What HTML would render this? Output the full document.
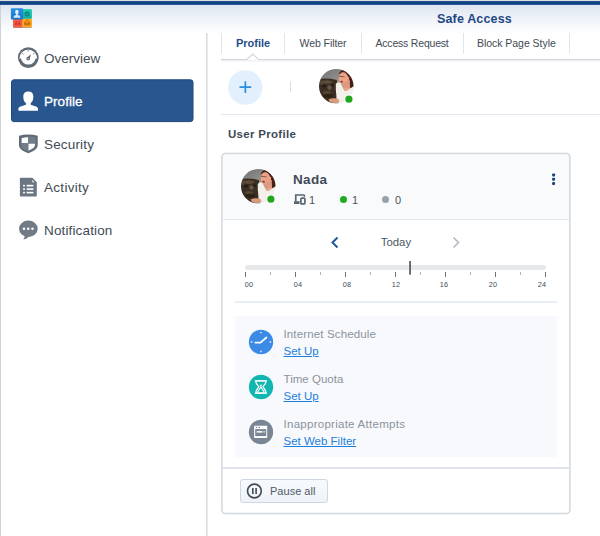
<!DOCTYPE html>
<html>
<head>
<meta charset="utf-8">
<title>Safe Access</title>
<style>
*{box-sizing:border-box;margin:0;padding:0}
html,body{width:600px;height:536px;overflow:hidden;background:#fff}
body{font-family:"Liberation Sans",sans-serif;color:#414b55;position:relative}
.abs{position:absolute}
.t{position:absolute;white-space:nowrap;line-height:1}
#topline{left:0;top:0;width:600px;height:1px;background:#dcdcd8}
#topbar{left:0;top:1px;width:600px;height:4px;background:linear-gradient(#2b5b99 0%,#0f4283 35%,#0f4283 65%,#34629d 100%)}
#hdr{left:0;top:5px;width:600px;height:29px;background:linear-gradient(#dfe6f1 0%,#eef2f8 45%,#ffffff 100%)}
#lborder{left:0;top:5px;width:1px;height:531px;background:#d0d1d3}
#title{left:437px;top:13px;font-size:12.5px;font-weight:bold;color:#1f4784;letter-spacing:.15px}
#vdiv{left:206px;top:33px;width:2px;height:503px;background:linear-gradient(90deg,#dadbdd 0,#dadbdd 50%,#e9eaec 50%)}
.nav{position:absolute;left:44px;font-size:13.5px;color:#414b55;line-height:1;white-space:nowrap;margin-top:1px}
#sel{left:11px;top:80px;width:183px;height:43px;background:#27538d;border-radius:3px;border:1px solid #1f4679}
.tab{position:absolute;top:38px;font-size:10.5px;color:#414b55;line-height:1;white-space:nowrap}
.tsep{position:absolute;top:33px;width:1px;height:21px;background:#dde5ef}
.lbl{position:absolute;left:283.500px;margin-top:.5px;font-size:11.5px;color:#8a939c;line-height:1;white-space:nowrap}
.lnk{position:absolute;left:283.500px;margin-top:.5px;font-size:11.5px;color:#1d7edb;text-decoration:underline;line-height:1;white-space:nowrap}
.tick{position:absolute;top:272px;width:1px;height:5px;background:#68737e}
.mtick{position:absolute;top:272px;width:1px;height:3px;background:#a9b4bf}
.tl{position:absolute;top:281px;font-size:7.300px;letter-spacing:.2px;color:#414b55;line-height:1;white-space:nowrap;transform:translateX(-50%)}
</style>
</head>
<body>
<div class="abs" id="hdr"></div>
<div class="abs" id="topline"></div>
<div class="abs" id="topbar"></div>
<div class="abs" id="lborder"></div>
<div class="t" id="title">Safe Access</div>

<!-- app icon -->
<svg class="abs" style="left:8px;top:5px" width="28" height="26" viewBox="8 5 28 26">
  <defs>
    <linearGradient id="gbl" x1="0" y1="0" x2="0" y2="1"><stop offset="0" stop-color="#2a90e4"/><stop offset="1" stop-color="#1876cc"/></linearGradient>
    <linearGradient id="gte" x1="0" y1="0" x2="0" y2="1"><stop offset="0" stop-color="#22d0ba"/><stop offset="1" stop-color="#10ad9c"/></linearGradient>
  </defs>
  <rect x="13.200" y="19.800" width="18.600" height="8.200" rx="1.200" fill="#6b4a3a" opacity=".55"/>
  <rect x="13" y="18.500" width="9.600" height="9" rx="1" fill="#f45a45"/>
  <rect x="22.300" y="18.500" width="9.600" height="8.800" rx="1" fill="#fbab1f"/>
  <rect x="22.600" y="9.100" width="9.300" height="9.700" rx="1" fill="url(#gte)"/>
  <rect x="10.900" y="8.300" width="12.300" height="11.100" rx="1" fill="url(#gbl)"/>
  <ellipse cx="16.900" cy="12" rx="1.750" ry="2.300" fill="#e2efff"/>
  <path d="M16 13.500 H17.800 V15 Q20.300 15.600 20.300 17.200 V17.800 H13.500 V17.200 Q13.500 15.600 16 15Z" fill="#d6e8fb"/>
  <circle cx="27.100" cy="13.700" r="2.550" fill="#0d887c"/>
  <path d="M26 13.900 L26.800 14.700 L28.300 12.900" stroke="#2fcdb8" stroke-width=".7" fill="none"/>
  <rect x="24.100" y="21.700" width="6.300" height="3.700" rx=".8" fill="#d26f0b"/>
  <path d="M25.700 21.800 V21 Q25.700 20 27.250 20 Q28.800 20 28.800 21 V21.800" stroke="#d26f0b" stroke-width="1" fill="none"/>
  <rect x="26.300" y="22.400" width="1.900" height=".6" fill="#f6b24a"/>
  <g fill="#c93a2a"><circle cx="16.200" cy="21.800" r=".9"/><circle cx="19.200" cy="21.800" r=".9"/><rect x="15.100" y="22.900" width="2.200" height="2.200"/><rect x="18.100" y="22.900" width="2.200" height="2.200"/></g>
</svg>

<!-- sidebar -->
<div class="abs" id="vdiv"></div>
<svg class="abs" style="left:8px;top:76px" width="190" height="50" viewBox="8 76 190 50"><rect x="11.500" y="79.800" width="181.500" height="41.800" rx="2.500" fill="#2a568f" stroke="#1d4781" stroke-width="1"/></svg>
<div class="nav" style="top:51px;letter-spacing:0">Overview</div>
<div class="nav" style="top:94px;color:#fff;letter-spacing:.05px;-webkit-text-stroke:.3px #fff">Profile</div>
<div class="nav" style="top:137px;letter-spacing:.17px">Security</div>
<div class="nav" style="top:180px;letter-spacing:.3px">Activity</div>
<div class="nav" style="top:223px;letter-spacing:.14px">Notification</div>

<!-- nav icons -->
<svg class="abs" style="left:12px;top:42px" width="32" height="204" viewBox="12 42 32 204">
  <!-- gauge -->
  <circle cx="28.300" cy="57.600" r="10.400" fill="#5f6a75"/>
  <path d="M19.400 58.600 A8.900 8.900 0 0 1 37.200 58.600Z" fill="#fff"/>
  <circle cx="28.300" cy="57.200" r="7.400" fill="#fff"/>
  <g stroke="#8a939c" stroke-width="1" stroke-linecap="round"><path d="M28.200 50 V51.300"/><path d="M22.200 53.200 L23.300 54.100"/><path d="M34.400 53.200 L33.300 54.100"/></g>
  <path d="M30.900 54.300 L29.600 59.400 L26.700 57.800Z" fill="#5f6a75"/>
  <circle cx="28.100" cy="58.700" r="1.800" fill="#5f6a75"/>
  <circle cx="28.100" cy="58.700" r=".6" fill="#e8eaec"/>
  <!-- person -->
  <path d="M28.300 91.500 C31.500 91.500 33.300 93.300 33.300 96 C33.300 97.500 33.200 98.500 33 99.400 C32.600 101 31.500 102.300 30.700 103 V104.700 L36.500 106.700 C37.600 107.200 38 108.200 38 109.300 V110.200 Q38 110.800 37.400 110.800 H19 Q18.400 110.800 18.400 110.200 V109.300 C18.400 108.200 18.800 107.200 19.900 106.700 L25.900 104.700 V103 C25.100 102.300 24 101 23.600 99.400 C23.400 98.500 23.300 97.500 23.300 96 C23.300 93.300 25.100 91.500 28.300 91.500Z" fill="#fff"/>
  <!-- shield -->
  <path d="M19 135.800 Q28.300 133.300 37.700 135.800 V145 C37.700 149 33 151.600 28.300 153.300 C23.600 151.600 19 149 19 145Z" fill="#5f6a75"/>
  <path d="M20.800 137.500 Q28.300 135.600 35.800 137.500 V145 C35.800 148 32 150 28.300 151.400 C24.600 150 20.800 148 20.800 145Z" fill="#727d89"/>
  <path d="M21.700 138.200 Q25 137.400 28 137.300 V143 H21.700Z" fill="#fff"/>
  <path d="M28.500 143.700 H34.900 V145 C34.900 147.400 31.600 149.200 28.500 150.400Z" fill="#fff"/>
  <!-- doc -->
  <path d="M19.900 178.600 Q19.900 177.800 20.700 177.800 H32.400 L36.800 182.200 V195.700 Q36.800 196.500 36 196.500 H20.700 Q19.900 196.500 19.900 195.700Z" fill="#6b7682"/>
  <path d="M32.300 180 L34.600 182.300 H32.300Z" fill="#fff"/>
  <g fill="#fff"><rect x="23.100" y="184.800" width="1.800" height="1.700"/><rect x="26.600" y="184.800" width="6.800" height="1.700"/><rect x="23.100" y="188.300" width="1.800" height="1.600"/><rect x="26.600" y="188.300" width="6.800" height="1.600"/><rect x="23.100" y="191.800" width="1.800" height="1.600"/><rect x="26.600" y="191.800" width="6.800" height="1.600"/></g>
  <!-- bubble -->
  <ellipse cx="28.350" cy="228.700" rx="9.350" ry="8.200" fill="#717b86"/>
  <path d="M24.800 235.300 Q24.800 238 23.100 239.200 Q26.500 239.400 29 236.500Z" fill="#717b86"/>
  <circle cx="24" cy="228.800" r="1.300" fill="#fff"/><circle cx="28.250" cy="228.800" r="1.300" fill="#fff"/><circle cx="32.500" cy="228.800" r="1.300" fill="#fff"/>
</svg>

<!-- tabs -->
<div class="tab" style="left:236px;font-weight:bold;color:#1f4e8c;font-size:11px">Profile</div>
<div class="tab" style="left:299.500px;letter-spacing:-.06px">Web Filter</div>
<div class="tab" style="left:375.500px;letter-spacing:-.2px">Access Request</div>
<div class="tab" style="left:477px;letter-spacing:-.04px">Block Page Style</div>
<div class="tsep" style="left:221px"></div>
<div class="tsep" style="left:284px"></div>
<div class="tsep" style="left:361px"></div>
<div class="tsep" style="left:463px"></div>
<div class="tsep" style="left:569px"></div>
<svg class="abs" style="left:221px;top:52px" width="379" height="12" viewBox="0 0 379 12">
  <path d="M0 7.500 H26 L31.700 2 L37.500 7.500 H379" fill="none" stroke="#d3d5d9" stroke-width="1.200"/>
  <path d="M0 8.700 H379" stroke="#eff1f4" stroke-width="1.400"/>
</svg>

<!-- add + avatar row -->
<svg class="abs" style="left:226px;top:68px" width="40" height="40" viewBox="226 68 40 40"><circle cx="245.250" cy="87.500" r="17.200" fill="#e1f0fc"/><path d="M239.500 87.200 H251.200 M245.350 81.300 V93.100" stroke="#2a8ee0" stroke-width="1.700" fill="none"/></svg>
<div class="abs" style="left:290px;top:81px;width:1px;height:11px;background:#d6e0eb"></div>
<div class="abs" style="left:221px;top:114px;width:379px;height:1px;background:#e1e7ee"></div>

<div class="t" style="left:228px;top:129px;font-size:11.5px;font-weight:bold;color:#3f4a58;letter-spacing:.3px">User Profile</div>

<!-- card -->
<svg class="abs" style="left:218px;top:150px" width="356" height="368" viewBox="218 150 356 368"><rect x="221.900" y="153.600" width="348" height="360" rx="3.500" fill="#fff" stroke="#d2d7df" stroke-width="1.500"/></svg>
<div class="abs" style="left:223px;top:155px;width:346px;height:64px;background:#f9fafc;border-radius:2px 2px 0 0"></div>
<div class="abs" style="left:223px;top:219px;width:346px;height:1px;background:#e1e8f1"></div>
<div class="t" style="left:293px;top:172.500px;font-size:13.5px;font-weight:bold;color:#3f4a58;letter-spacing:.35px">Nada</div>

<!-- device icon -->
<svg class="abs" style="left:292px;top:192px" width="16" height="14" viewBox="292 192 16 14">
  <path d="M295.750 201.200 V195 H303.600 Q304.500 195 304.500 196 V196.700" fill="none" stroke="#5a6572" stroke-width="1.700"/>
  <rect x="294" y="201.200" width="5.500" height="2.800" fill="#5a6572"/>
  <rect x="300.900" y="198.100" width="4" height="5.800" rx="1" fill="#f9fafc" stroke="#5a6572" stroke-width="1.700"/>
</svg>
<div class="t" style="left:309px;top:195px;font-size:11px;color:#4a5560">1</div>
<div class="abs" style="left:339.500px;top:196px;width:7px;height:7px;border-radius:50%;background:#1faa1f"></div>
<div class="t" style="left:352px;top:195px;font-size:11px;color:#4a5560">1</div>
<div class="abs" style="left:382px;top:196px;width:7px;height:7px;border-radius:50%;background:#9aa1a9"></div>
<div class="t" style="left:395px;top:195px;font-size:11px;color:#4a5560">0</div>

<!-- kebab -->
<svg class="abs" style="left:550px;top:172px" width="8" height="14" viewBox="550 172 8 14"><g fill="#1c437e"><rect x="552.100" y="173.400" width="3" height="3" rx=".9"/><rect x="552.100" y="177.700" width="3" height="3" rx=".9"/><rect x="552.100" y="182" width="3" height="3" rx=".9"/></g></svg>

<!-- date nav -->
<svg class="abs" style="left:330px;top:236px" width="10" height="13" viewBox="0 0 10 13"><path d="M7.500 1.500 L2.500 6.500 L7.500 11.500" fill="none" stroke="#1f5a9e" stroke-width="2"/></svg>
<svg class="abs" style="left:451px;top:236px" width="10" height="13" viewBox="0 0 10 13"><path d="M2.500 1.500 L7.500 6.500 L2.500 11.500" fill="none" stroke="#b3bac2" stroke-width="1.600"/></svg>
<div class="t" style="left:380.700px;top:237px;font-size:11.4px;color:#4d5762">Today</div>

<!-- timeline -->
<div class="abs" style="left:245px;top:265px;width:301px;height:5px;border-radius:2.5px;background:#e7e8ea"></div>
<svg class="abs" style="left:405px;top:258px" width="10" height="20" viewBox="405 258 10 20"><rect x="409.250" y="261" width="1.600" height="13.600" fill="#46505a"/></svg>
<div id="ticks"></div>
<div class="tick" style="left:245px"></div><div class="tick" style="left:295px"></div><div class="tick" style="left:345px"></div><div class="tick" style="left:395px"></div><div class="tick" style="left:445px"></div><div class="tick" style="left:495px"></div><div class="tick" style="left:545px"></div>
<div class="mtick" style="left:270px"></div><div class="mtick" style="left:320px"></div><div class="mtick" style="left:370px"></div><div class="mtick" style="left:420px"></div><div class="mtick" style="left:470px"></div><div class="mtick" style="left:520px"></div>
<div class="tl" style="left:249px">00</div><div class="tl" style="left:298px">04</div><div class="tl" style="left:347px">08</div><div class="tl" style="left:396px">12</div><div class="tl" style="left:444px">16</div><div class="tl" style="left:493px">20</div><div class="tl" style="left:542px">24</div>

<div class="abs" style="left:235px;top:301px;width:322px;height:2px;background:#e8edf3"></div>

<!-- inner box -->
<div class="abs" style="left:235px;top:316px;width:322px;height:141px;background:#f8f9fc;border-radius:2px"></div>

<svg class="abs" style="left:247px;top:328px" width="28" height="28" viewBox="-14 -14 28 28">
  <circle r="12.700" fill="#fdfeff"/><circle r="12.200" fill="#3a8ae6"/>
  <path d="M-5.600 .6 H-.5 L5.400 -4.500" stroke="#fff" stroke-width="1.800" stroke-linecap="round" stroke-linejoin="round" fill="none"/>
  <g fill="#cfe2fa"><circle cx="0" cy="-9.400" r=".95"/><circle cx="0" cy="9.400" r=".95"/><circle cx="-9.400" cy="0" r=".95"/><circle cx="9.400" cy="0" r=".95"/></g>
</svg>
<div class="lbl" style="top:328px;letter-spacing:.14px">Internet Schedule</div>
<div class="lnk" style="top:345px">Set Up</div>

<svg class="abs" style="left:247px;top:373px" width="28" height="28" viewBox="-14 -14 28 28">
  <circle r="12.700" fill="#fdfeff"/><circle r="12.200" fill="#12b6b0"/>
  <rect x="-6.100" y="-6.900" width="12" height="1.600" fill="#fff"/>
  <rect x="-6.100" y="5.200" width="12" height="1.700" fill="#fff"/>
  <path d="M-5.200 -5.500 C-5 -2.500 -2.500 -1.500 -2.200 -.3 C-2.500 1 -5 2.500 -5.200 5.300" stroke="#fff" stroke-width="1.300" fill="none"/>
  <path d="M5 -5.500 C4.800 -2.500 2.300 -1.500 2 -.3 C2.300 1 4.800 2.500 5 5.300" stroke="#fff" stroke-width="1.300" fill="none"/>
  <path d="M-1.700 -2.300 H1.500 L-.1 -.7Z" fill="#fff"/>
  <path d="M-3.300 5 L-.1 -.2 L3.100 5" stroke="#fff" stroke-width="1.200" fill="none"/>
</svg>
<div class="lbl" style="top:373px;letter-spacing:.03px">Time Quota</div>
<div class="lnk" style="top:390px">Set Up</div>

<svg class="abs" style="left:247px;top:418px" width="28" height="28" viewBox="-14 -14 28 28">
  <circle r="12.700" fill="#fdfeff"/><circle r="12.200" fill="#7a8694"/>
  <rect x="-6.900" y="-6.200" width="13.100" height="12.100" rx=".6" fill="#fff"/>
  <rect x="-5.800" y="-2.900" width="11" height="7" fill="#7a8694"/>
  <rect x="-4.300" y="-.9" width="5.700" height="1.500" fill="#fff"/>
  <rect x="2.500" y="-.9" width="1.200" height="1.500" fill="#fff"/>
  <rect x="-5.200" y="-5.200" width="1.300" height="1.100" fill="#7a8694"/><rect x="-2.600" y="-5.200" width="1.600" height="1.100" fill="#7a8694"/>
</svg>
<div class="lbl" style="top:418px;letter-spacing:.27px">Inappropriate Attempts</div>
<div class="lnk" style="top:435px">Set Web Filter</div>

<!-- footer -->
<div class="abs" style="left:222px;top:467px;width:348px;height:2px;background:#dfe3e8"></div>
<div class="abs" style="left:240px;top:479px;width:88px;height:24px;border:1px solid #cdd6e1;border-radius:3px;background:linear-gradient(#f7fafd,#eff3f8)"></div>
<svg class="abs" style="left:245px;top:482px" width="18" height="18" viewBox="245 482 18 18"><circle cx="254.400" cy="491" r="6.900" fill="none" stroke="#414b55" stroke-width="1.600"/><rect x="252" y="488" width="1.600" height="6" fill="#414b55"/><rect x="255.300" y="488" width="1.600" height="6" fill="#414b55"/></svg>
<div class="t" style="left:270px;top:486px;font-size:11px;color:#4f5a66;letter-spacing:.02px">Pause all</div>

<!-- avatars -->
<svg class="abs" style="left:318px;top:68px" width="38" height="38" viewBox="-1 -1 38 38">
  <defs>
    <clipPath id="c1"><circle cx="17.300" cy="17.300" r="17.300"/></clipPath>
    <filter id="bl" x="-10%" y="-10%" width="120%" height="120%"><feGaussianBlur stdDeviation=".55"/></filter>
    <linearGradient id="gb" x1="0" y1="0" x2=".6" y2="1"><stop offset="0" stop-color="#6c6c6a"/><stop offset=".5" stop-color="#929290"/><stop offset="1" stop-color="#a3a3a0"/></linearGradient>
    <g id="av">
      <circle cx="17.300" cy="17.300" r="17.900" fill="#fff"/>
      <g clip-path="url(#c1)"><g filter="url(#bl)">
        <rect x="-2" y="-2" width="40" height="40" fill="url(#gb)"/>
        <path d="M-2 10.500 L5 9.500 L12 9.800 L17.800 11 L18.300 15 L17.300 20 L18.300 26 L16.500 31 L10 36 L-2 36Z" fill="#3a2d21"/>
        <ellipse cx="8" cy="13" rx="5" ry="1.800" fill="#5e4d3a"/>
        <ellipse cx="10.500" cy="18.500" rx="2.200" ry="2.600" fill="#66543f"/>
        <ellipse cx="5" cy="17" rx="2" ry="1.200" fill="#241a12"/>
        <ellipse cx="13.500" cy="16.500" rx="1.800" ry="1" fill="#241a12"/>
        <ellipse cx="8" cy="23.500" rx="4" ry="1.200" fill="#5a4936"/>
        <ellipse cx="9" cy="27" rx="5" ry="1.600" fill="#2a2017"/>
        <ellipse cx="2.500" cy="13.500" rx="1.500" ry="2.500" fill="#5a4a38"/>
        <path d="M19.800 5 Q22 -.5 28.500 .8 Q34 4 35.800 12 L35.800 19.800 L31 18.800 Q31.500 13 29.800 9.500 Q27 4.800 22 6Z" fill="#45201a"/>
        <ellipse cx="24.500" cy="9.800" rx="4.900" ry="6.500" fill="#eca285" transform="rotate(-8 24.500 9.800)"/>
        <path d="M29 7.500 Q31.500 9 31 13 L29 13Z" fill="#e79a7c"/>
        <path d="M30.300 8.500 Q35 10.500 35.500 19.500 L31.300 18.800 Q32.200 13 30 10.500Z" fill="#4a1f19"/>
        <path d="M22.300 14 L29.500 12 L31.500 20 L26 22.500Z" fill="#e2987c"/>
        <path d="M16.800 15 Q18.800 12 21.800 14.500 L25.300 21.500 L27.800 21.800 L35 17 L36 36 L20 36 L17.500 28 Q16.500 21 16.800 15Z" fill="#f3f0ea"/>
        <path d="M25.300 21.500 L27.800 21.800 L31 19 L26 19Z" fill="#e8a88e"/>
        <path d="M19.800 7.300 L25.500 7.800" stroke="#6b4a48" stroke-width=".8" fill="none"/>
        <ellipse cx="22.600" cy="12.700" rx="1.300" ry=".9" fill="#8a3030"/>
        <path d="M9.500 30.500 Q14 28.300 19.500 30 L20.500 33 Q15 34.500 11 33Z" fill="#dd9a7a"/>
      </g></g>
      <circle cx="29.900" cy="30.200" r="4.700" fill="#fff"/>
      <circle cx="29.900" cy="30.200" r="3.600" fill="#23a61f"/>
    </g>
  </defs>
  <use href="#av"/>
</svg>
<svg class="abs" style="left:240px;top:168px" width="38" height="38" viewBox="-1 -1 38 38">
  <use href="#av"/>
</svg>
</body>
</html>
